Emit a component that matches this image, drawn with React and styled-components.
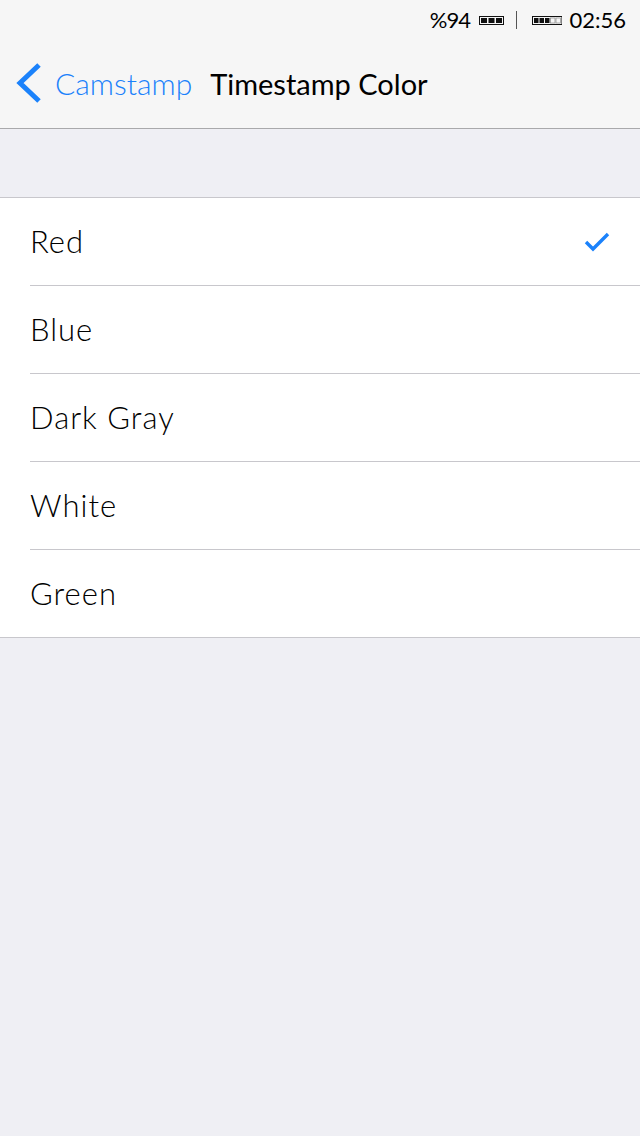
import React from "react";
import styled, { createGlobalStyle } from "styled-components";

const Global = createGlobalStyle`
  html, body { margin: 0; padding: 0; background: #efeff4; }
  body { font-family: Lato, "Noto Sans", sans-serif; }
  * { box-sizing: border-box; }
`;

const Screen = styled.div`
  width: 640px;
  min-height: 1136px;
  background: #efeff4;
  display: flex;
  flex-direction: column;
`;

const Header = styled.header`
  background: #f6f6f6;
  border-bottom: 1px solid #a9a9ab;
  height: 129px;
  display: flex;
  flex-direction: column;
`;

const StatusBar = styled.div`
  height: 40px;
  display: flex;
  align-items: center;
  justify-content: flex-end;
  padding-right: 14px;
  font-family: Lato, sans-serif;
  color: #000;
`;

const StatusText = styled.span`
  font-size: ${(p) => p.$size}px;
  font-weight: ${(p) => p.$weight || 300};
  letter-spacing: ${(p) => p.$spacing || 0}px;
  line-height: 1;
  margin-right: ${(p) => p.$gap || 0}px;
`;

const IconSlot = styled.span`
  display: flex;
  margin-right: ${(p) => p.$gap || 0}px;
`;

const Divider = styled.span`
  width: 1px;
  height: 18px;
  background: #555;
  margin-right: 15px;
`;

const NavBar = styled.nav`
  flex: 1;
  display: flex;
  align-items: center;
  padding-left: 16px;
  padding-bottom: 2px;
`;

const BackButton = styled.button`
  border: 0;
  background: none;
  padding: 0;
  display: flex;
  align-items: center;
  gap: 13px;
  color: #1b82fb;
  font-family: Lato, sans-serif;
  font-size: 30px;
  font-weight: 300;
  cursor: pointer;
`;

const Title = styled.h1`
  margin: 0 0 0 18px;
  font-family: Lato, sans-serif;
  font-size: 29px;
  font-weight: 400;
  color: #000;
`;

const Spacer = styled.div`
  height: 68px;
`;

const Group = styled.ul`
  list-style: none;
  margin: 0;
  padding: 0;
  background: #fff;
  border-top: 1px solid #c8c7cc;
  border-bottom: 1px solid #c8c7cc;
`;

const Row = styled.li`
  margin-left: 30px;
  height: ${(p) => (p.$last ? 87 : 88)}px;
  display: flex;
  align-items: center;
  justify-content: space-between;
  padding-right: 30px;
  border-bottom: ${(p) => (p.$last ? "none" : "1px solid #c8c7cc")};
`;

const Label = styled.span`
  font-family: Lato, sans-serif;
  font-size: 31px;
  font-weight: 300;
  letter-spacing: 1px;
  color: #000;
  margin-top: -2px;
`;

const Cells = ({ filled, total, cell, gap }) => {
  const w = total * cell + (total - 1) * gap + 4;
  return (
    <svg width={w} height="9" viewBox={`0 0 ${w} 9`}>
      <rect x="0.5" y="0.5" width={w - 1} height="8" fill="none" stroke="#111" />
      {Array.from({ length: total }).map((_, i) => (
        <rect
          key={i}
          x={2 + i * (cell + gap)}
          y="2"
          width={cell}
          height="5"
          fill={i < filled ? "#111" : "none"}
          stroke={i < filled ? "none" : "#888"}
          strokeWidth="0.7"
        />
      ))}
    </svg>
  );
};

const Chevron = () => (
  <svg width="26" height="40" viewBox="0 0 26 40">
    <path d="M23 2 L4 20 L23 38" fill="none" stroke="#1b82fb" strokeWidth="5" />
  </svg>
);

const Check = () => (
  <svg width="26" height="22" viewBox="0 0 26 22">
    <path d="M2 11 L9 18 L24 3" fill="none" stroke="#1b82fb" strokeWidth="3.4" />
  </svg>
);

const colors = ["Red", "Blue", "Dark Gray", "White", "Green"];

export default function App() {
  return (
    <Screen>
      <Global />
      <Header>
        <StatusBar>
          <StatusText $size={22} $weight={400} $spacing={-1} $gap={9}>%94</StatusText>
          <IconSlot $gap={12}>
            <Cells filled={3} total={3} cell={6} gap={1.5} />
          </IconSlot>
          <Divider />
          <IconSlot $gap={7}>
            <Cells filled={3} total={5} cell={4.5} gap={1} />
          </IconSlot>
          <StatusText $size={22} $weight={400}>02:56</StatusText>
        </StatusBar>
        <NavBar>
          <BackButton>
            <Chevron />
            Camstamp
          </BackButton>
          <Title>Timestamp Color</Title>
        </NavBar>
      </Header>
      <Spacer />
      <Group>
        {colors.map((c, i) => (
          <Row key={c} $last={i === colors.length - 1}>
            <Label>{c}</Label>
            {i === 0 && <Check />}
          </Row>
        ))}
      </Group>
    </Screen>
  );
}
